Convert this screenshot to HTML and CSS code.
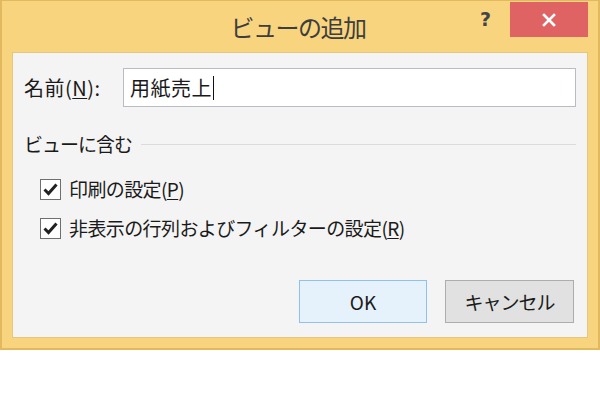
FILE: index.html
```html
<!DOCTYPE html>
<html lang="ja">
<head>
<meta charset="utf-8">
<title>ビューの追加</title>
<link rel="stylesheet" href="styles.css">
</head>
<body>
<div class="window">
  <div class="titlebar">
    <div class="title">ビューの追加</div>
    <div class="help">?</div>
    <div class="close">
      <svg width="14" height="14" viewBox="0 0 14 14"><path d="M2 2 L12 12 M12 2 L2 12" stroke="#fff" stroke-width="2.6" stroke-linecap="square" fill="none"/></svg>
    </div>
  </div>
  <div class="content">
    <div class="name-row">
      <span class="label">名前(<u>N</u>):</span>
      <div class="input"><span class="value">用紙売上</span><span class="caret"></span></div>
    </div>
    <div class="section">
      <span class="section-label">ビューに含む</span>
      <span class="section-line"></span>
    </div>
    <div class="check-row">
      <span class="checkbox"><svg width="15" height="13" viewBox="0 0 15 13"><path d="M1.5 6.5 L5.5 10.5 L13.5 1.5" stroke="#222" stroke-width="3" fill="none"/></svg></span>
      <span class="check-label">印刷の設定(<u>P</u>)</span>
    </div>
    <div class="check-row">
      <span class="checkbox"><svg width="15" height="13" viewBox="0 0 15 13"><path d="M1.5 6.5 L5.5 10.5 L13.5 1.5" stroke="#222" stroke-width="3" fill="none"/></svg></span>
      <span class="check-label">非表示の行列およびフィルターの設定(<u>R</u>)</span>
    </div>
    <div class="buttons">
      <div class="btn btn-ok">OK</div>
      <div class="btn btn-cancel">キャンセル</div>
    </div>
  </div>
</div>
</body>
</html>
```
FILE: styles.css
```css
html, body {
  margin: 0;
  padding: 0;
  background: #ffffff;
}
body {
  width: 600px;
  height: 398px;
  font-family: "Noto Sans CJK JP", "Noto Sans", sans-serif;
  color: #1a1a1a;
}
.window {
  width: 600px;
  height: 350px;
  box-sizing: border-box;
  background: #f8d47e;
  border: 1px solid #e2b95e;
  border-left-width: 2px;
  border-right-width: 2px;
  border-bottom-width: 2px;
  padding: 0 10px 10px 10px;
  display: flex;
  flex-direction: column;
}
.titlebar {
  height: 51px;
  position: relative;
  flex: none;
}
.title {
  position: absolute;
  left: 0;
  right: 0;
  top: 10px;
  text-align: center;
  font-size: 24px;
  line-height: 32px;
  color: #3e3e3e;
  letter-spacing: -1.5px;
  padding-right: 4px;
}
.help {
  position: absolute;
  right: 97px;
  top: 5px;
  font-family: "DejaVu Sans", sans-serif;
  font-weight: bold;
  font-size: 19px;
  line-height: 26px;
  color: #444;
}
.close {
  position: absolute;
  right: 0;
  top: 1px;
  width: 78px;
  height: 35px;
  background: #e06363;
  display: flex;
  align-items: center;
  justify-content: center;
}
.content {
  flex: 1;
  background: #f4f4f4;
  border: 1px solid #e4c67e;
  padding: 15px 11px 14px 11px;
  display: flex;
  flex-direction: column;
}
.name-row {
  display: flex;
  align-items: center;
  height: 39px;
}
.label {
  width: 99px;
  font-size: 20px;
  line-height: 24px;
  letter-spacing: 0.5px;
}
u {
  text-decoration: underline;
  text-underline-offset: 2px;
  text-decoration-thickness: 1px;
}
.input {
  flex: 1;
  height: 39px;
  box-sizing: border-box;
  background: #ffffff;
  border: 1px solid #b9bdc3;
  display: flex;
  align-items: center;
  padding-left: 6px;
}
.value {
  font-size: 20px;
  line-height: 24px;
  letter-spacing: 0.5px;
}
.caret {
  width: 1px;
  height: 24px;
  background: #111;
  margin-left: 1px;
}
.section {
  display: flex;
  align-items: center;
  margin-top: 24px;
  height: 26px;
}
.section-label {
  font-size: 19px;
  line-height: 26px;
  letter-spacing: -1px;
}
.section-line {
  flex: 1;
  height: 1px;
  background: #dcdcdc;
  margin-left: 9px;
  margin-right: 0;
}
.check-row {
  display: flex;
  align-items: center;
  height: 24px;
  padding-left: 16px;
  margin-top: 15px;
}
.section + .check-row {
  margin-top: 20px;
}
.checkbox {
  width: 21px;
  height: 21px;
  box-sizing: border-box;
  border: 1px solid #6f6f6f;
  background: #ffffff;
  display: flex;
  align-items: center;
  justify-content: center;
  margin-right: 8px;
  flex: none;
}
.check-label {
  font-size: 19px;
  line-height: 24px;
  letter-spacing: -0.6px;
}
.buttons {
  margin-top: auto;
  display: flex;
  justify-content: flex-end;
  gap: 18px;
  padding-right: 2px;
}
.btn {
  height: 43px;
  box-sizing: border-box;
  display: flex;
  align-items: center;
  justify-content: center;
  font-size: 19px;
}
.btn-ok {
  width: 128px;
  background: #e5f1fb;
  border: 1px solid #8fc1ef;
}
.btn-cancel {
  width: 129px;
  background: #e1e1e1;
  border: 1px solid #adadad;
  letter-spacing: -1px;
}
```
